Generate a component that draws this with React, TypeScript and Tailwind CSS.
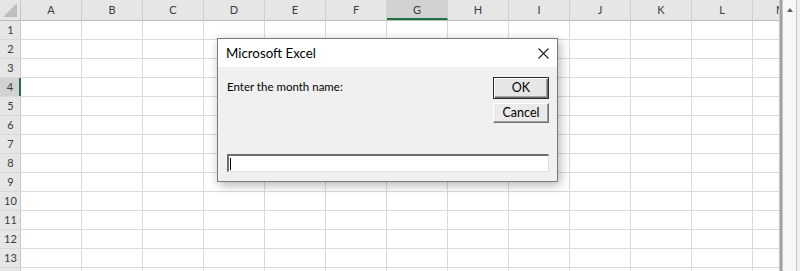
import React from "react";

const cols = ["A", "B", "C", "D", "E", "F", "G", "H", "I", "J", "K", "L"];
const rows = [1, 2, 3, 4, 5, 6, 7, 8, 9, 10, 11, 12, 13, 14];

function ColHeader({ label }: { label: string }) {
  const active = label === "G";
  return (
    <div
      className={
        "flex h-full w-[61px] shrink-0 items-center justify-center border-r border-[#d0d0d0] " +
        (active ? "border-b-2 border-b-[#217346] bg-[#d2d2d2] pt-[2px]" : "")
      }
    >
      {label}
    </div>
  );
}

function Row({ n }: { n: number }) {
  const active = n === 4;
  // row 14 sits below the window edge, so its label is left off
  return (
    <div className="flex h-[19px] shrink-0 border-b border-[#dadada]">
      <div
        className={
          "flex w-[21px] shrink-0 items-center justify-center pl-[1px] text-[#3c3c3c] " +
          (active
            ? "border-r-2 border-[#217346] bg-[#d2d2d2]"
            : "border-r border-[#c6c6c6] bg-[#e6e6e6]")
        }
      >
        {n < 14 ? n : null}
      </div>
      {cols.map((c) => (
        <div key={c} className="w-[61px] shrink-0 border-r border-[#dadada] bg-white" />
      ))}
      <div className="w-[26px] shrink-0 bg-white" />
    </div>
  );
}

function Dialog() {
  return (
    <div className="absolute left-[217px] top-[38px] flex h-[144px] w-[341px] flex-col border border-[#7a7a7a] bg-[#f0f0f0] shadow-[2px_3px_10px_rgba(0,0,0,0.3)] font-['Lato',sans-serif] text-black">
      <div className="flex h-[28px] shrink-0 items-center justify-between bg-white pl-[8px] pr-[8px]">
        <span className="pt-[1px] text-[13.3px]">Microsoft Excel</span>
        <svg width="11" height="11" viewBox="0 0 11 11" className="mt-[1px]">
          <path d="M0.5 0.5 L10.5 10.5 M10.5 0.5 L0.5 10.5" stroke="#222" strokeWidth="1.1" fill="none" />
        </svg>
      </div>
      <div className="flex flex-1 flex-col pl-[9px] pr-[8px] pt-[10px] pb-[9px] text-[12.5px]">
        <div className="flex flex-1 items-start justify-between">
          <span className="mt-[1px] text-[11.5px] text-black">Enter the month name:</span>
          <div className="flex w-[56px] flex-col gap-[4px]">
            <button
              type="button"
              className="h-[22px] w-[56px] border border-[#2b2b2b] bg-[#e6e6e6] shadow-[inset_1px_1px_0_#ffffff,inset_-1px_-1px_0_#6e6e6e,inset_-2px_-2px_0_#a0a0a0]"
            >
              OK
            </button>
            <button
              type="button"
              className="h-[20px] w-[56px] border-l border-t border-r border-b border-l-white border-t-white border-r-[#6e6e6e] border-b-[#6e6e6e] bg-[#eaeaea] shadow-[inset_-1px_-1px_0_#a0a0a0]"
            >
              Cancel
            </button>
          </div>
        </div>
        <div className="flex h-[18px] items-center border-b border-l-2 border-r border-t-2 border-b-[#e3e3e3] border-l-[#6e6e6e] border-r-[#e3e3e3] border-t-[#6e6e6e] bg-white pl-[1px]">
          <div className="h-[12px] w-[1px] bg-black" />
        </div>
      </div>
    </div>
  );
}

export default function App() {
  return (
    <div className="relative h-[271px] w-[800px] overflow-hidden bg-white font-['Lato',sans-serif] text-[11px]">
      <div className="flex h-full">
        <div className="flex w-[779px] shrink-0 flex-col">
          <div className="flex h-[21px] shrink-0 border-b border-[#bdbdbd] bg-[#e6e6e6] text-[#3c3c3c]">
            <div className="relative w-[21px] shrink-0 border-r border-[#c6c6c6]">
              <svg width="14" height="14" viewBox="0 0 14 14" className="absolute bottom-[3px] right-[3px]">
                <path d="M14 0 L14 14 L0 14 Z" fill="#bfbfbf" />
              </svg>
            </div>
            {cols.map((c) => (
              <ColHeader key={c} label={c} />
            ))}
            <div className="w-[26px] shrink-0 overflow-hidden">
              <div className="flex h-full w-[56px] items-center justify-center">M</div>
            </div>
          </div>
          {rows.map((n) => (
            <Row key={n} n={n} />
          ))}
        </div>
        <div className="flex w-[21px] shrink-0">
          <div className="w-[1px] bg-[#c8c8c8]" />
          <div className="w-[2px] bg-[#a0a0a0]" />
          <div className="w-[1px] bg-[#c8c8c8]" />
          <div className="flex w-[13px] flex-col bg-[#f7f7f7]">
            <div className="flex h-[16px] items-center justify-center pt-[3px]">
              <svg width="6" height="4" viewBox="0 0 6 4">
                <path d="M3 0 L6 4 L0 4 Z" fill="#606060" />
              </svg>
            </div>
          </div>
          <div className="w-[1px] bg-[#c6c6c6]" />
          <div className="w-[3px] bg-[#f0f0f0]" />
        </div>
      </div>
      <Dialog />
    </div>
  );
}
